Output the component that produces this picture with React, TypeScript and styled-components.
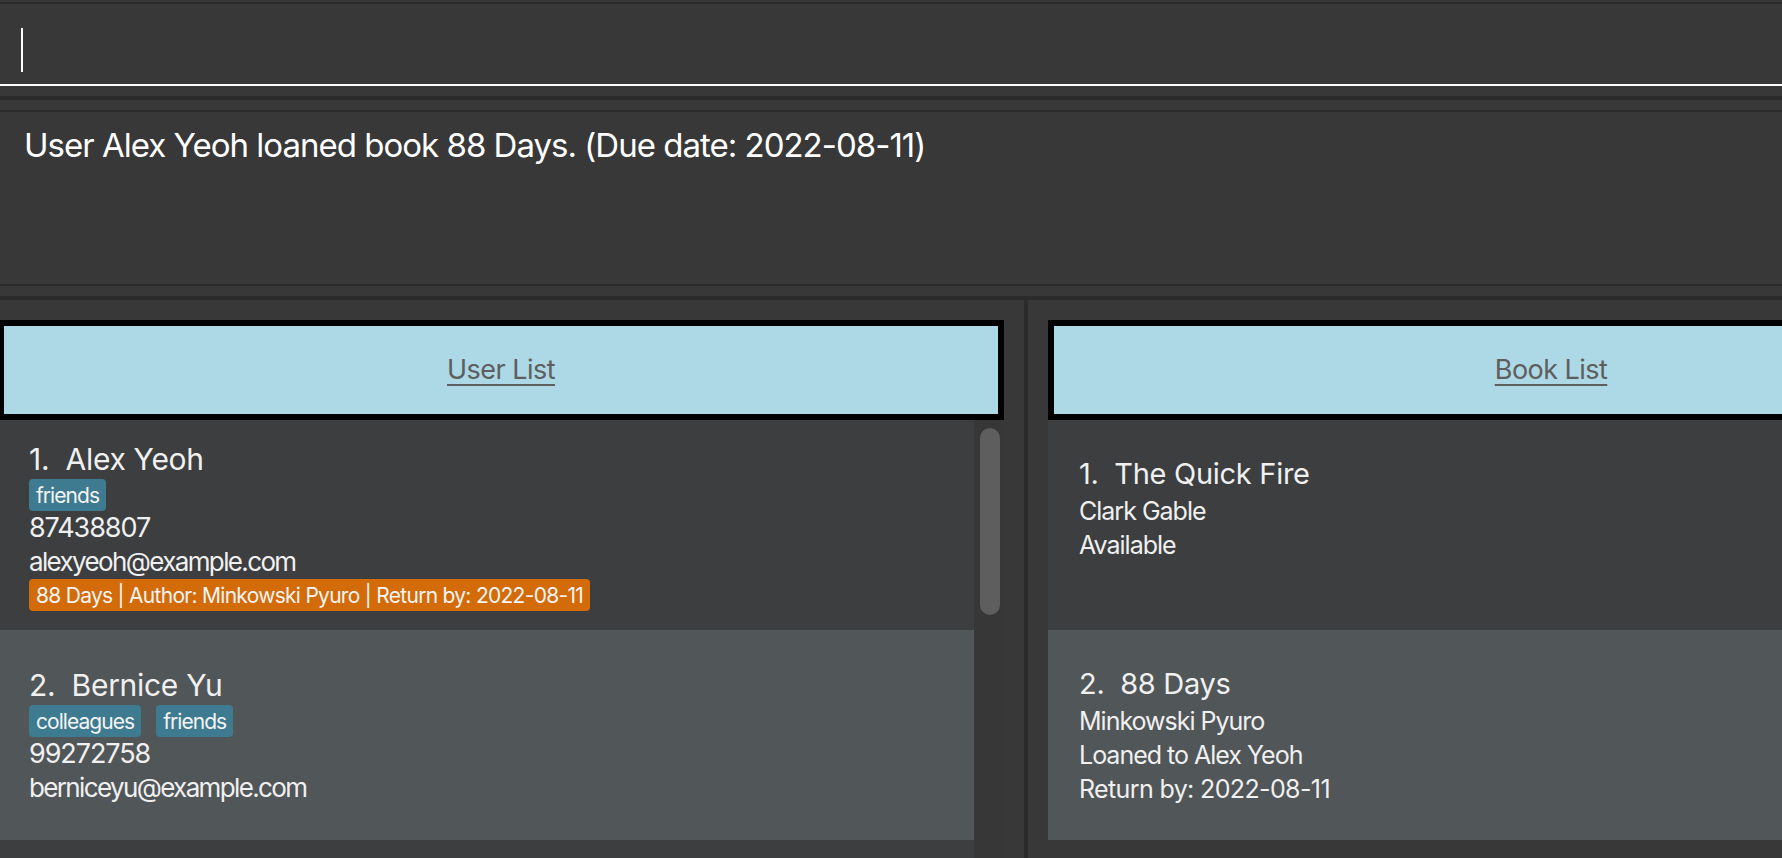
import React from "react";
import styled, { createGlobalStyle } from "styled-components";

const GlobalStyle = createGlobalStyle`
  *, *::before, *::after { box-sizing: border-box; }
  html, body { margin: 0; padding: 0; background: #383838; }
  body { font-family: Inter, "Noto Sans", sans-serif; overflow: hidden; }
  #root { width: 1782px; height: 858px; overflow: hidden; }
`;

const Window = styled.div`
  width: 1782px;
  height: 858px;
  display: flex;
  flex-direction: column;
  background: #383838;
  overflow: hidden;
`;

const CommandPane = styled.div`
  padding: 2px 0 10px;
`;

const CommandField = styled.div`
  height: 84px;
  border-top: 2px solid #2b2b2b;
  border-bottom: 2px solid #ffffff;
  padding: 24px 0 0 21px;
`;

const Caret = styled.span`
  display: block;
  width: 2px;
  height: 44px;
  background: #ffffff;
`;

const PaneDivider = styled.div`
  height: 4px;
  flex: none;
  background: #2b2b2b;
`;

const ResultPane = styled.div`
  padding: 10px 0;
`;

const ResultBox = styled.div`
  height: 176px;
  border-top: 2px solid #2b2b2b;
  border-bottom: 2px solid #2b2b2b;
  padding: 13px 24px 0;
  color: #ffffff;
  font-size: 33px;
  line-height: 40px;
  letter-spacing: -0.03em;
`;

const SplitPane = styled.div`
  flex: 1;
  min-height: 0;
  display: flex;
`;

const Pane = styled.div<{ $side: "left" | "right" }>`
  flex: none;
  width: ${(p) => (p.$side === "left" ? "1024px" : "754px")};
  padding: ${(p) => (p.$side === "left" ? "20px 20px 0 0" : "20px 0 0 20px")};
  display: flex;
  flex-direction: column;
  overflow: hidden;
`;

const VDivider = styled.div`
  width: 4px;
  flex: none;
  background: #2b2b2b;
`;

const PaneContent = styled.div<{ $shift?: number }>`
  width: 1006px;
  flex: none;
  margin-left: ${(p) => p.$shift ?? 0}px;
  display: flex;
  flex-direction: column;
  height: 100%;
`;

const ListHeader = styled.div`
  height: 100px;
  flex: none;
  border: 6px solid #000000;
  background: #add8e6;
  display: flex;
  align-items: center;
  justify-content: center;
`;

const HeaderTitle = styled.span`
  font-size: 27px;
  line-height: 34px;
  color: #5e5e5e;
  text-decoration: underline;
  text-decoration-thickness: 2px;
  text-underline-offset: 5px;
  letter-spacing: -0.02em;
`;

const ListBody = styled.div`
  flex: 1;
  display: flex;
  min-height: 0;
`;

const CellColumn = styled.div<{ $bg: string }>`
  width: 976px;
  flex: none;
  display: flex;
  flex-direction: column;
  background: ${(p) => p.$bg};
`;

const ScrollTrack = styled.div`
  width: 30px;
  flex: none;
  background: #373737;
  padding: 8px 4px 0 6px;
`;

const ScrollThumb = styled.div`
  height: 187px;
  border-radius: 10px;
  background: #5e5e5e;
`;

const Cell = styled.div<{ $odd: boolean; $center: boolean }>`
  height: 210px;
  flex: none;
  padding: ${(p) => (p.$center ? "0 0 0 31px" : "34px 0 0 31px")};
  display: flex;
  flex-direction: column;
  justify-content: ${(p) => (p.$center ? "center" : "flex-start")};
  background: ${(p) => (p.$odd ? "#515658" : "#3c3e3f")};
  color: #f0f0f0;
`;

const CardTitle = styled.div<{ $size: number }>`
  font-size: ${(p) => p.$size}px;
  line-height: 40px;
  white-space: pre;
  letter-spacing: -0.01em;
`;

const DetailLine = styled.div<{ $size: number; $track: number }>`
  font-size: ${(p) => p.$size}px;
  line-height: 34px;
  white-space: pre;
  letter-spacing: ${(p) => p.$track}em;
`;

const TagRow = styled.div`
  height: 32px;
  display: flex;
  gap: 15px;
`;

const Tag = styled.span<{ $tone: "blue" | "orange" }>`
  height: 32px;
  display: inline-flex;
  align-items: center;
  padding: 0 7px;
  border-radius: 4px;
  font-size: 21px;
  letter-spacing: ${(p) => (p.$tone === "blue" ? "-0.045em" : "-0.034em")};
  white-space: pre;
  color: #f4f4f4;
  background: ${(p) => (p.$tone === "blue" ? "#3e7b91" : "#d36b09")};
`;

type User = {
  name: string;
  tags: string[];
  phone: string;
  email: string;
  loans: string[];
};

type Book = {
  title: string;
  author: string;
  status: string;
  due?: string;
};

const users: User[] = [
  {
    name: "Alex Yeoh",
    tags: ["friends"],
    phone: "87438807",
    email: "alexyeoh@example.com",
    loans: ["88 Days | Author: Minkowski Pyuro | Return by: 2022-08-11"],
  },
  {
    name: "Bernice Yu",
    tags: ["colleagues", "friends"],
    phone: "99272758",
    email: "berniceyu@example.com",
    loans: [],
  },
];

const books: Book[] = [
  { title: "The Quick Fire", author: "Clark Gable", status: "Available" },
  {
    title: "88 Days",
    author: "Minkowski Pyuro",
    status: "Loaned to Alex Yeoh",
    due: "Return by: 2022-08-11",
  },
];

function UserCard({ user, index }: { user: User; index: number }) {
  return (
    <Cell $odd={index % 2 === 1} $center>
      <CardTitle $size={30}>{`${index + 1}.  ${user.name}`}</CardTitle>
      <TagRow>
        {user.tags.map((t) => (
          <Tag key={t} $tone="blue">
            {t}
          </Tag>
        ))}
      </TagRow>
      <DetailLine $size={27} $track={-0.04}>
        {user.phone}
      </DetailLine>
      <DetailLine $size={26} $track={-0.063}>
        {user.email}
      </DetailLine>
      {user.loans.length > 0 && (
        <TagRow>
          {user.loans.map((l) => (
            <Tag key={l} $tone="orange">
              {l}
            </Tag>
          ))}
        </TagRow>
      )}
    </Cell>
  );
}

function BookCard({ book, index }: { book: Book; index: number }) {
  return (
    <Cell $odd={index % 2 === 1} $center={false}>
      <CardTitle $size={29}>{`${index + 1}.  ${book.title}`}</CardTitle>
      <DetailLine $size={25} $track={-0.04}>
        {book.author}
      </DetailLine>
      <DetailLine $size={25} $track={-0.04}>
        {book.status}
      </DetailLine>
      {book.due && (
        <DetailLine $size={25} $track={-0.025}>
          {book.due}
        </DetailLine>
      )}
    </Cell>
  );
}

export default function App() {
  return (
    <>
      <GlobalStyle />
      <Window>
        <CommandPane>
          <CommandField>
            <Caret />
          </CommandField>
        </CommandPane>
        <PaneDivider />
        <ResultPane>
          <ResultBox>User Alex Yeoh loaned book 88 Days. (Due date: 2022-08-11)</ResultBox>
        </ResultPane>
        <PaneDivider />
        <SplitPane>
          <Pane $side="left">
            <PaneContent $shift={-2}>
              <ListHeader>
                <HeaderTitle>User List</HeaderTitle>
              </ListHeader>
              <ListBody>
                <CellColumn $bg="#3c3e3f">
                  {users.map((u, i) => (
                    <UserCard key={u.email} user={u} index={i} />
                  ))}
                </CellColumn>
                <ScrollTrack>
                  <ScrollThumb />
                </ScrollTrack>
              </ListBody>
            </PaneContent>
          </Pane>
          <VDivider />
          <Pane $side="right">
            <PaneContent>
              <ListHeader>
                <HeaderTitle>Book List</HeaderTitle>
              </ListHeader>
              <ListBody>
                <CellColumn $bg="#383838">
                  {books.map((b, i) => (
                    <BookCard key={b.title} book={b} index={i} />
                  ))}
                </CellColumn>
              </ListBody>
            </PaneContent>
          </Pane>
        </SplitPane>
      </Window>
    </>
  );
}
